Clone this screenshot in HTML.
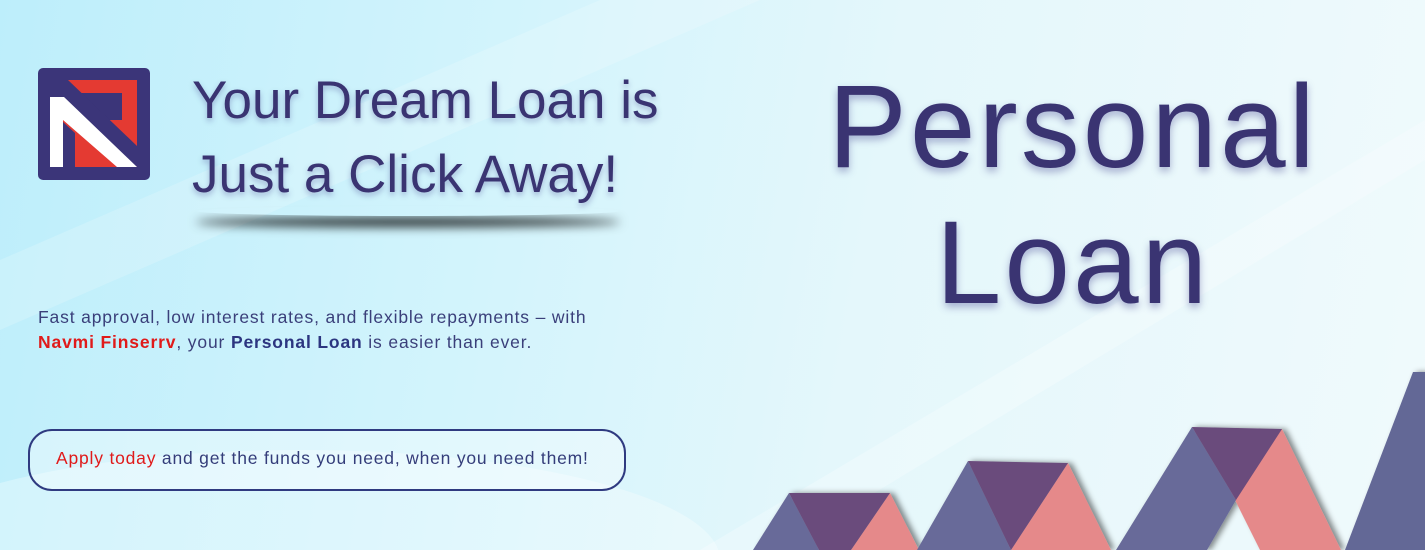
<!DOCTYPE html>
<html><head><meta charset="utf-8"><style>
*{margin:0;padding:0;box-sizing:border-box}
html,body{width:1425px;height:550px;overflow:hidden}
body{position:relative;font-family:"Liberation Sans",sans-serif;
background:linear-gradient(100deg,#bdeefb 0%,#d3f4fc 35%,#e4f7fb 60%,#f0fafc 100%);}
.abs{position:absolute}
.h1{left:192px;top:64px;font-size:53px;line-height:74px;color:#3a3472;text-shadow:0 3px 6px rgba(60,60,140,.35);white-space:nowrap}
.shadow{left:196px;top:206px;width:424px;height:10px;border-radius:50%;box-shadow:0 11px 10px rgba(0,0,0,.8)}
.big{width:560px;left:793px;height:130px;text-align:center;font-size:118px;letter-spacing:3px;color:#3a3472;text-shadow:0 4px 8px rgba(60,60,140,.4);line-height:1}
.p{left:38px;top:305px;font-size:17.5px;line-height:25px;letter-spacing:.85px;color:#3a3f7a;white-space:nowrap}
.pill{left:28px;top:429px;width:598px;height:62px;border:2px solid #2f3a80;border-radius:24px;font-size:17.5px;letter-spacing:.8px;color:#343d7a;padding:17px 0 0 26px;white-space:nowrap;background:rgba(255,255,255,.35)}
.red{color:#e01a1a}
</style></head><body>
<svg class="abs" style="left:0;top:0" width="1425" height="550">
<polygon points="0,260 600,0 760,0 0,330" fill="rgba(255,255,255,.18)"/>
<polygon points="700,550 1425,120 1425,160 780,550" fill="rgba(255,255,255,.25)"/>
<ellipse cx="300" cy="560" rx="420" ry="110" fill="rgba(255,255,255,.3)"/>
</svg>
<svg class="abs" style="left:38px;top:68px" width="112" height="112" viewBox="0 0 112 112">
<rect width="112" height="112" rx="5" fill="#3b3579"/>
<rect x="14" y="12" width="85" height="87" fill="#e43a32"/>
<polygon points="37,25 84,25 84,52 70,52 70,82 37,50" fill="#3b3579"/>
<polygon points="14,12 30,12 99,78 99,99 14,30" fill="#3b3579"/>
<polygon points="25,54 37,65 37,99 25,99" fill="#3b3579"/>
<polygon points="37,79 59,99 37,99" fill="#e43a32"/>
<polygon points="12,29 26,29 99,99 79,99 25,52 25,99 12,99" fill="#fff"/>
</svg>
<div class="abs h1">Your Dream Loan is<br>Just a Click Away!</div>
<div class="abs shadow"></div>
<div class="abs big" style="top:68px">Personal</div>
<div class="abs big" style="top:204px">Loan</div>
<div class="abs p">Fast approval, low interest rates, and flexible repayments – with<br><b class="red">Navmi Finserrv</b>, your <b style="color:#2c3580">Personal Loan</b> is easier than ever.</div>
<div class="abs pill"><span class="red">Apply today</span> and get the funds you need, when you need them!</div>
<svg class="abs" style="left:0;top:0" width="1425" height="550">
<defs><filter id="s" x="-20%" y="-20%" width="140%" height="140%"><feDropShadow dx="4" dy="0" stdDeviation="3" flood-color="#000" flood-opacity=".45"/></filter></defs>
<g filter="url(#s)">
<polygon points="890,493 919,550 851,550" fill="#e5898a"/>
<polygon points="753,550 789,493 819,550" fill="#676a99"/>
<polygon points="789,493 890,493 851,550 819,550" fill="#6a4b7c"/>
</g>
<g filter="url(#s)">
<polygon points="1068,463 1111,550 1011,550" fill="#e5898a"/>
<polygon points="917,550 968,461 1011,550" fill="#676a99"/>
<polygon points="968,461 1068,463 1011,550" fill="#6a4b7c"/>
</g>
<g filter="url(#s)">
<polygon points="1282,429 1341,550 1260,550 1230,490" fill="#e5898a"/>
<polygon points="1116,550 1192,427 1236,500 1207,550" fill="#676a99"/>
<polygon points="1192,427 1282,429 1236,500" fill="#6a4b7c"/>
</g>
<g filter="url(#s)">
<polygon points="1345,550 1413,372 1425,372 1425,550" fill="#646796"/>
</g>
</svg>
</body></html>
